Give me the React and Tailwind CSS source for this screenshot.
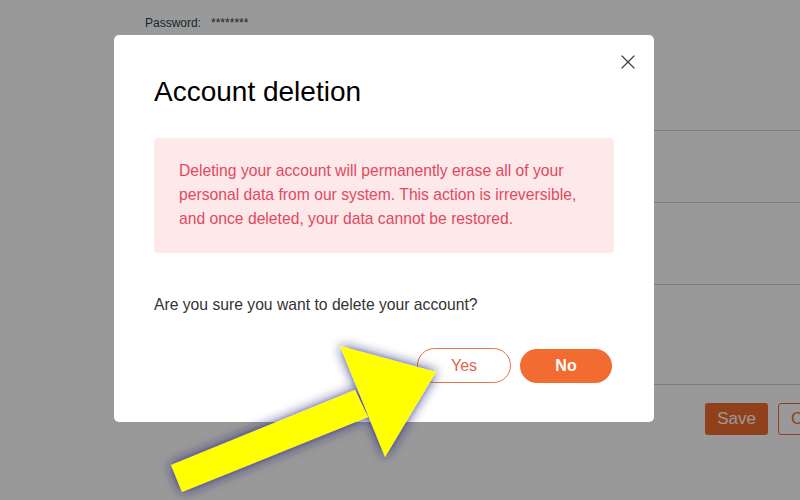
import { X } from "lucide-react";

function Arrow() {
  return (
    <svg className="absolute left-0 top-0 pointer-events-none" width="800" height="500" viewBox="0 0 800 500">
      <defs>
        <filter id="glow" x="-30%" y="-30%" width="160%" height="160%">
          <feGaussianBlur in="SourceAlpha" stdDeviation="6" result="blur" />
          <feFlood floodColor="#20207a" floodOpacity="0.9" />
          <feComposite in2="blur" operator="in" result="shadow" />
          <feMerge>
            <feMergeNode in="shadow" />
            <feMergeNode in="SourceGraphic" />
          </feMerge>
        </filter>
      </defs>
      <g filter="url(#glow)">
        <polygon points="171,465 182,492 368,417 355,390" fill="#ffff00" />
        <polygon points="340,346 436,372 385,457" fill="#ffff00" />
      </g>
    </svg>
  );
}

export default function App() {
  return (
    <div className="relative w-[800px] h-[500px] overflow-hidden bg-white font-['Liberation_Sans',Arial,sans-serif]">
      {/* page behind the modal */}
      <div className="absolute inset-0">
        <div className="pl-[145px] pt-[14px] text-[12px] text-[#2c3e50] flex gap-[10px]">
          <span>Password:</span>
          <span>********</span>
        </div>
        <div className="ml-[654px] mt-[98px] border-t border-[#d0d0d0] h-[72px]" />
        <div className="ml-[654px] border-t border-[#d0d0d0] h-[82px]" />
        <div className="ml-[654px] border-t border-[#d0d0d0] h-[100px]" />
        <div className="ml-[654px] border-t border-[#d0d0d0]" />
        <div className="flex gap-[10px] pl-[705px] pt-[18px] w-[900px]">
          <button className="w-[63px] h-[32px] shrink-0 rounded-[3px] bg-[#f26b30] text-white text-[17px]">Save</button>
          <button className="w-[80px] h-[32px] shrink-0 rounded-[3px] border border-[#f26b30] text-[#f26b30] text-[17px] text-left pl-[12px]">Cancel</button>
        </div>
      </div>

      {/* overlay */}
      <div className="absolute inset-0 bg-black/40" />

      {/* modal */}
      <div className="absolute left-[114px] top-[35px] w-[540px] h-[387px] bg-white rounded-[5px] pl-[40px] pr-[42px] pt-[40px]">
        <button className="absolute right-[14px] top-[15px] text-[#444]">
          <X size={24} strokeWidth={1.2} />
        </button>
        <h2 className="text-[28px] leading-[34px] text-black">Account deletion</h2>
        <div className="mt-[29px] mr-[-2px] bg-[#fde8ea] rounded-[4px] px-[25px] pt-[21px] pb-[22px] text-[15.7px] leading-[24px] text-[#e2485e]">
          Deleting your account will permanently erase all of your personal data from our system. This action is irreversible, and once deleted, your data cannot be restored.
        </div>
        <p className="mt-[42px] text-[15.7px] leading-[20px] text-[#333]">Are you sure you want to delete your account?</p>
        <div className="flex justify-end items-center gap-[9px] mt-[33px]">
          <button className="w-[94px] h-[35px] rounded-full border border-[#e8734a] text-[#e0654a] text-[16px]">Yes</button>
          <button className="w-[92px] h-[34px] rounded-full bg-[#f26b30] text-white text-[16px] font-bold">No</button>
        </div>
      </div>

      <Arrow />
    </div>
  );
}
